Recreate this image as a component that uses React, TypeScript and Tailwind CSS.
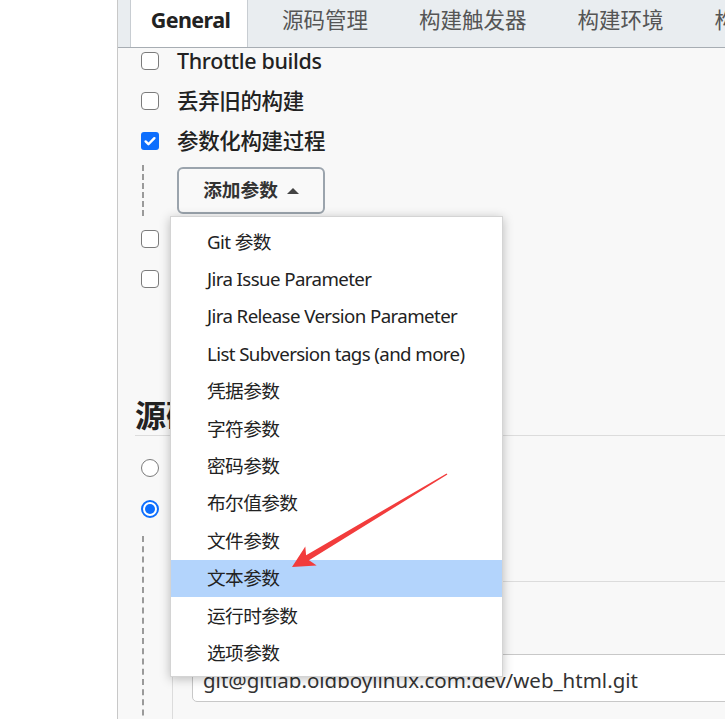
import React from "react";

const FONT = '"Noto Sans", "Noto Sans CJK SC", sans-serif';

const TABS = ["源码管理", "构建触发器", "构建环境", "构建"];

const PARAMS = [
  "Git 参数",
  "Jira Issue Parameter",
  "Jira Release Version Parameter",
  "List Subversion tags (and more)",
  "凭据参数",
  "字符参数",
  "密码参数",
  "布尔值参数",
  "文件参数",
  "文本参数",
  "运行时参数",
  "选项参数",
];

function Checkbox({ checked }: { checked?: boolean }) {
  if (checked) {
    return (
      <span className="flex h-[18px] w-[18px] shrink-0 items-center justify-center rounded-[3px] bg-[#0d6efd]">
        <svg width="14" height="14" viewBox="0 0 16 16" fill="none">
          <path d="M3 8.5l3.2 3.2L13 4.8" stroke="white" strokeWidth="2.8" strokeLinecap="round" strokeLinejoin="round" />
        </svg>
      </span>
    );
  }
  return <span className="h-[18px] w-[18px] shrink-0 rounded-[4px] border-[1.5px] border-[#7b7b7b] bg-white" />;
}

function Radio({ checked }: { checked?: boolean }) {
  if (checked) {
    return (
      <span className="flex h-[18px] w-[18px] shrink-0 items-center justify-center rounded-full border-2 border-[#0d6efd] bg-white">
        <span className="h-[10px] w-[10px] rounded-full bg-[#0d6efd]" />
      </span>
    );
  }
  return <span className="h-[18px] w-[18px] shrink-0 rounded-full border-[1.5px] border-[#7b7b7b] bg-white" />;
}

function CheckRow({ label, checked, className }: { label?: string; checked?: boolean; className?: string }) {
  return (
    <div className={`flex h-[24px] items-center ${className ?? ""}`}>
      <Checkbox checked={checked} />
      {label && <span className="ml-[18px] text-[21.5px] font-medium tracking-[-0.35px] text-[#222]">{label}</span>}
    </div>
  );
}

export default function App() {
  return (
    <div className="relative flex h-[719px] w-[725px] overflow-hidden bg-white" style={{ fontFamily: FONT }}>
      <div className="w-[117px] shrink-0 bg-white" />

      <div className="flex min-w-0 flex-1 flex-col border-l border-[#c8c8c8] bg-[#f8f8f8]">
        {/* tab bar */}
        <div className="flex h-[48px] shrink-0 border-b border-[#a7adb3] bg-[#e9edf0] pl-[12px]">
          <div className="flex w-[118px] shrink-0 items-center justify-center border-x border-[#c8cdd2] bg-white pb-[6px] pl-[3px] text-[21.5px] font-bold tracking-[-0.6px] text-[#222]">
            General
          </div>
          <div className="ml-[34px] flex gap-[51px] whitespace-nowrap pb-[6px]">
            {TABS.map((t) => (
              <div key={t} className="flex items-center text-[21.5px] text-[#555]">
                {t}
              </div>
            ))}
          </div>
        </div>

        <div className="flex flex-col pl-[23px] pt-px">
          <CheckRow label="Throttle builds" />
          <CheckRow label="丢弃旧的构建" className="mt-[16px]" />
          <CheckRow label="参数化构建过程" checked className="mt-[16px]" />

          <div className="ml-px mt-[12px] h-[51px] border-l-2 border-dashed border-[#9a9a9a] pl-[33px] pt-[2px]">
            <div className="flex h-[47px] w-[148px] items-center justify-center gap-[9px] rounded-[6px] border-2 border-[#9ba4ad] bg-[#f9f9f9] text-[18.7px] font-bold text-[#333]">
              添加参数
              <span className="h-0 w-0 border-x-[6px] border-b-[6px] border-x-transparent border-b-[#444]" />
            </div>
          </div>

          <CheckRow className="mt-[11px]" />
          <CheckRow className="mt-[16px]" />
        </div>

        <div className="ml-[17px] mt-[106px] border-b border-[#dcdcdc] pb-[2px]">
          <div className="h-[36px] text-[31px] font-bold leading-[36px] text-[#222]">源码管理</div>
        </div>

        <div className="flex flex-col pl-[23px]">
          <div className="mt-[20px] flex h-[24px] items-center">
            <Radio />
          </div>
          <div className="mt-[17px] flex h-[24px] items-center">
            <Radio checked />
          </div>

          <div className="ml-px mt-[15px] h-[200px] border-l-2 border-dashed border-[#9a9a9a] pl-[28px] pt-[45px]">
            <div className="h-[160px] border-l border-t border-[#dcdcdc] pl-[19px] pt-[72px]">
              <div className="flex h-[48px] w-[560px] items-center rounded-[5px] border border-[#c8c8c8] bg-white pl-[10px] pt-[5px] text-[20.5px] text-[#333]">
                git@gitlab.oldboylinux.com:dev/web_html.git
              </div>
            </div>
          </div>
        </div>
      </div>

      {/* dropdown menu */}
      <div className="absolute left-[170px] top-[216px] h-[461px] w-[333px] border border-[#d4d4d4] bg-white pt-[6px] shadow-[0_2px_10px_rgba(0,0,0,0.25)]">
        {PARAMS.map((p) => (
          <div
            key={p}
            className={`flex h-[37.4px] items-center pl-[36px] text-[18.7px] tracking-[-0.6px] text-[#222] ${p === "文本参数" ? "bg-[#b3d4fc]" : ""}`}
          >
            {p}
          </div>
        ))}
      </div>

      {/* annotation arrow */}
      <svg className="pointer-events-none absolute left-0 top-0" width="725" height="719" viewBox="0 0 725 719">
        <polygon
          points="446.6,473.4 306.1,555.2 305.3,546.6 292,567 316.7,565.4 309,560.2 447.4,474.6"
          fill="#f23c3c"
        />
      </svg>
    </div>
  );
}
